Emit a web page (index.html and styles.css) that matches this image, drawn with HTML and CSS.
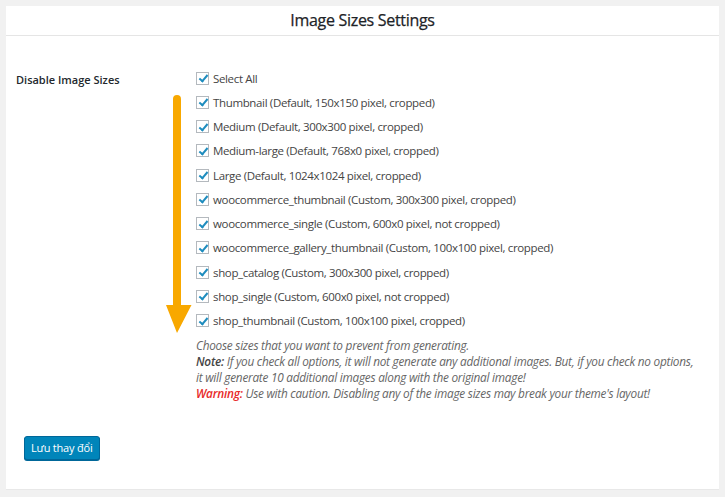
FILE: index.html
```html
<!DOCTYPE html>
<html>
<head>
<meta charset="utf-8">
<link rel="stylesheet" href="styles.css">
</head>
<body>
<div class="card">
  <div class="card-head">Image Sizes Settings</div>
  <div class="card-body">
    <div class="row">
      <div class="label">Disable Image Sizes</div>
      <div class="field">
        <div class="opts">
          <label class="opt"><span class="cb"></span>Select All</label>
          <label class="opt"><span class="cb"></span>Thumbnail (Default, 150x150 pixel, cropped)</label>
          <label class="opt"><span class="cb"></span>Medium (Default, 300x300 pixel, cropped)</label>
          <label class="opt"><span class="cb"></span>Medium-large (Default, 768x0 pixel, cropped)</label>
          <label class="opt"><span class="cb"></span>Large (Default, 1024x1024 pixel, cropped)</label>
          <label class="opt"><span class="cb"></span>woocommerce_thumbnail (Custom, 300x300 pixel, cropped)</label>
          <label class="opt"><span class="cb"></span>woocommerce_single (Custom, 600x0 pixel, not cropped)</label>
          <label class="opt"><span class="cb"></span>woocommerce_gallery_thumbnail (Custom, 100x100 pixel, cropped)</label>
          <label class="opt"><span class="cb"></span>shop_catalog (Custom, 300x300 pixel, cropped)</label>
          <label class="opt"><span class="cb"></span>shop_single (Custom, 600x0 pixel, not cropped)</label>
          <label class="opt"><span class="cb"></span>shop_thumbnail (Custom, 100x100 pixel, cropped)</label>
          <svg class="arrow" width="26" height="240" viewBox="0 0 26 240">
            <path d="M7 4 Q7 0 11 0 Q15 0 15 4 L15 210 L25.5 210 L11 238 L0 210 L7 210 Z" fill="#f8a800"/>
          </svg>
        </div>
        <p class="desc">Choose sizes that you want to prevent from generating.<br><b>Note:</b> If you check all options, it will not generate any additional images. But, if you check no options, it will generate 10 additional images along with the original image!<br><b class="warn">Warning:</b> Use with caution. Disabling any of the image sizes may break your theme's layout!</p>
      </div>
    </div>
    <button class="btn">Lưu thay đổi</button>
  </div>
</div>
</body>
</html>
```
FILE: styles.css
```css
html, body { margin: 0; padding: 0; }
body {
  background: #f1f1f1;
  font-family: "Open Sans", "Noto Sans", sans-serif;
  color: #444;
  width: 725px;
  height: 497px;
  overflow: hidden;
}
.card {
  margin: 6px 6px 0 6px;
  width: 713px;
  height: 484px;
  background: #fff;
  box-sizing: border-box;
  border-bottom: 1px solid #e8e8e8;
}
.card-head {
  height: 29px;
  border-bottom: 1px solid #e5e5e5;
  text-align: center;
  font-size: 16px;
  line-height: 29px;
  color: #1d2327;
  letter-spacing: -0.3px;
  -webkit-text-stroke: 0.25px #1d2327;
}
.card-body { padding: 30px 22px 0 10px; }
.row { display: flex; }
.label {
  width: 180px;
  font-size: 11px;
  line-height: 16px;
  font-weight: 600;
  color: #23282d;
  padding-top: 6px;
}
.field { flex: 1; }
.opts { position: relative; }
.opt {
  display: flex;
  align-items: center;
  height: 24.25px;
  font-size: 11.5px;
  color: #444;
  letter-spacing: -0.35px;
}
.cb {
  width: 11px;
  height: 11px;
  border: 1px solid #b4b9be;
  margin-right: 4px;
  position: relative;
  flex: none;
  background: #fff;
}
.cb::after {
  content: "";
  position: absolute;
  left: 3.5px;
  top: 0.5px;
  width: 3px;
  height: 7px;
  border: solid #1e8cbe;
  border-width: 0 2px 2px 0;
  transform: rotate(40deg);
}
.arrow {
  position: absolute;
  left: -30px;
  top: 29px;
}
.desc {
  margin: 4px 0 0 0;
  font-size: 11.8px;
  line-height: 16px;
  font-style: italic;
  color: #666;
  letter-spacing: -0.25px;
}
.desc b { color: #444; font-weight: 600; }
.desc b.warn { color: #e82a2a; }
.btn {
  margin: 35px 0 0 8px;
  background: #0085ba;
  border: 1px solid #006799;
  border-radius: 3px;
  color: #fff;
  font-family: "Open Sans", "Noto Sans", sans-serif;
  font-size: 11px;
  letter-spacing: -0.2px;
  height: 24px;
  padding: 0 6px;
  box-shadow: 0 1px 0 #006799;
}
```
